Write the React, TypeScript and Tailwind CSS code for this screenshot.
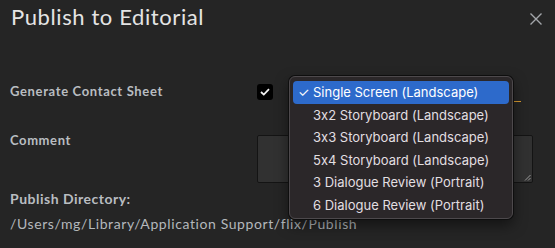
import React from "react";

const options = [
  "Single Screen (Landscape)",
  "3x2 Storyboard (Landscape)",
  "3x3 Storyboard (Landscape)",
  "5x4 Storyboard (Landscape)",
  "3 Dialogue Review (Portrait)",
  "6 Dialogue Review (Portrait)",
];

export default function App() {
  return (
    <div className="relative w-[555px] h-[248px] overflow-hidden bg-[#252525] font-['Lato',sans-serif]">
      {/* header */}
      <div className="flex items-start justify-between pl-[11px] pr-[13px] pt-[3px]">
        <h1 className="text-[22px] leading-[28px] font-normal text-[#e4e4e4] tracking-[0.6px]">
          Publish to Editorial
        </h1>
        <button className="mt-[10px] text-[#a3a6aa]">
          <svg width="12" height="12" viewBox="0 0 12 12" fill="none">
            <path d="M0.5 0.5 L11.5 11.5 M11.5 0.5 L0.5 11.5" stroke="currentColor" strokeWidth="1.4" />
          </svg>
        </button>
      </div>

      {/* form */}
      <div className="flex flex-col pl-[10px] pt-[53px]">
        <div className="flex items-center h-[16px]">
          <label className="w-[247px] text-[13px] font-bold text-[#b9bdc1] tracking-[0.65px]">
            Generate Contact Sheet
          </label>
          <div className="w-[16px] h-[16px] rounded-[3px] bg-black flex items-center justify-center">
            <svg width="10" height="8" viewBox="0 0 10 8" fill="none">
              <path d="M1 4 L3.8 6.6 L9 1.2" stroke="#f2f2f2" strokeWidth="1.8" />
            </svg>
          </div>
          <div className="ml-[17px] w-[231px] h-[20px] border-b border-[#d89a30]" />
        </div>

        <div className="flex items-start mt-[35px]">
          <label className="w-[247px] text-[13px] font-bold text-[#b9bdc1] tracking-[0.6px] -mt-[4px]">
            Comment
          </label>
          <div className="relative w-[276px] h-[48px] rounded-[2px] bg-[#313131] border border-[#141414]">
            <svg className="absolute right-[1px] bottom-[1px]" width="7" height="7" viewBox="0 0 7 7">
              <path d="M1 6.5 L6.5 1 M4 6.5 L6.5 4" stroke="#9a9a9a" strokeWidth="1" />
            </svg>
          </div>
        </div>

        <p className="mt-[5px] text-[14px] font-bold text-[#b9bdc1] tracking-[0.5px]">Publish Directory:</p>
        <p className="mt-[4px] text-[14px] text-[#b4b8bc] tracking-[0.6px]">
          /Users/mg/Library/Application Support/flix/Publish
        </p>
      </div>

      {/* open select menu */}
      <div className="absolute left-[289px] top-[76px] w-[224px] h-[143px] rounded-[6px] bg-[#2b2729] border border-[#4d494c] shadow-[0_0_0_1px_#0e0e0e,0_6px_14px_rgba(0,0,0,0.5)] px-[3px] pt-[4px] font-['Inter',sans-serif] [font-feature-settings:'calt'_0]">
        {options.map((o, i) => (
          <div
            key={o}
            className={
              i === 0
                ? "flex items-center h-[23px] rounded-[4px] bg-[#2d6acb] text-white text-[13px]"
                : "flex items-center h-[22.5px] text-[#e2dfe1] text-[13px]"
            }
          >
            <span className="w-[20px] pl-[5px] text-[13px]">{i === 0 ? "✓" : ""}</span>
            {o}
          </div>
        ))}
      </div>
    </div>
  );
}
